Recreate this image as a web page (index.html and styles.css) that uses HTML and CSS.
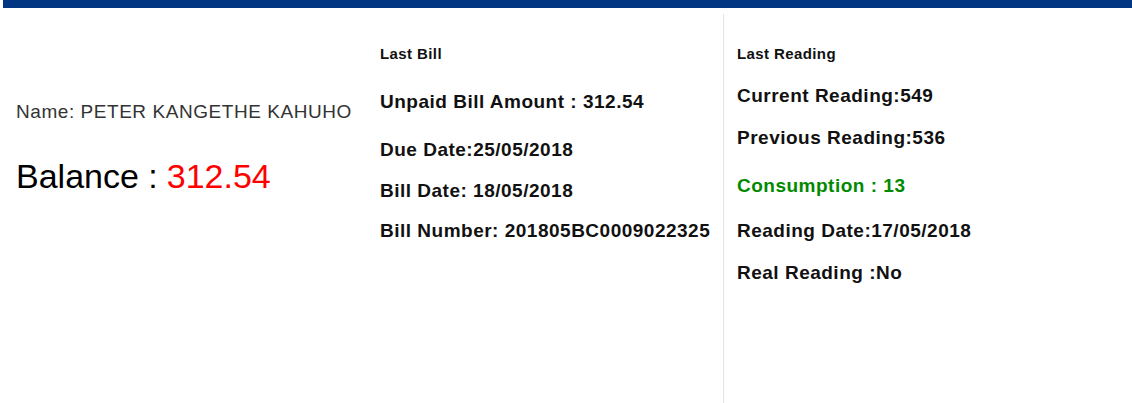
FILE: index.html
```html
<!DOCTYPE html>
<html lang="en">
<head>
<meta charset="utf-8">
<title>Account Summary</title>
<link rel="stylesheet" href="styles.css">
</head>
<body>
<div class="topbar"></div>
<main class="summary">
  <section class="col col-account">
    <p class="name">Name: PETER KANGETHE KAHUHO</p>
    <p class="balance">Balance :<span class="balance-value">312.54</span></p>
  </section>
  <section class="col col-bill">
    <h5 class="col-title">Last Bill</h5>
    <p class="row r-unpaid">Unpaid Bill Amount : 312.54</p>
    <p class="row r-due">Due Date:25/05/2018</p>
    <p class="row r-billdate">Bill Date: 18/05/2018</p>
    <p class="row r-billno">Bill Number: 201805BC0009022325</p>
  </section>
  <section class="col col-reading">
    <h5 class="col-title">Last Reading</h5>
    <p class="row r-current">Current Reading:549</p>
    <p class="row r-previous">Previous Reading:536</p>
    <p class="row r-consumption">Consumption : 13</p>
    <p class="row r-readdate">Reading Date:17/05/2018</p>
    <p class="row r-real">Real Reading :No</p>
  </section>
</main>
</body>
</html>
```
FILE: styles.css
```css
html, body {
  margin: 0;
  padding: 0;
  background: #fff;
}
body {
  font-family: "Liberation Sans", Arial, sans-serif;
  color: #111;
}
.topbar {
  height: 8px;
  margin-left: 3px;
  background: #023682;
}
.summary {
  display: grid;
  grid-template-columns: 365px 358px 1fr;
  margin-top: 6px;
  min-height: calc(100vh - 14px);
}
.col {
  display: flex;
  flex-direction: column;
  align-items: flex-start;
}
.col p, .col h5 {
  margin: 0;
}
.col-account {
  padding: 87px 0 0 16px;
}
.name {
  font-size: 19px;
  line-height: 22px;
  letter-spacing: 0.55px;
  color: #333;
}
.balance {
  margin-top: 33px !important;
  font-size: 34px;
  line-height: 40px;
  color: #000;
}
.balance-value {
  color: #ff0000;
  margin-left: 9px;
}
.col-bill {
  padding: 32px 0 0 15px;
}
.col-reading {
  padding: 32px 0 0 13px;
  border-left: 1px solid #e3e3e3;
}
.col-title {
  font-size: 15px;
  line-height: 16px;
  font-weight: bold;
  letter-spacing: 0.4px;
  color: #111;
}
.row {
  font-size: 19px;
  line-height: 22px;
  font-weight: bold;
  letter-spacing: 0.5px;
  color: #111;
}
.r-unpaid { margin-top: 29px !important; }
.r-due { margin-top: 26px !important; }
.r-billdate { margin-top: 19px !important; }
.r-billno { margin-top: 18px !important; }
.r-current { margin-top: 23px !important; }
.r-previous { margin-top: 20px !important; }
.r-consumption { margin-top: 26px !important; color: #008a00; }
.r-readdate { margin-top: 23px !important; }
.r-real { margin-top: 20px !important; }
```
